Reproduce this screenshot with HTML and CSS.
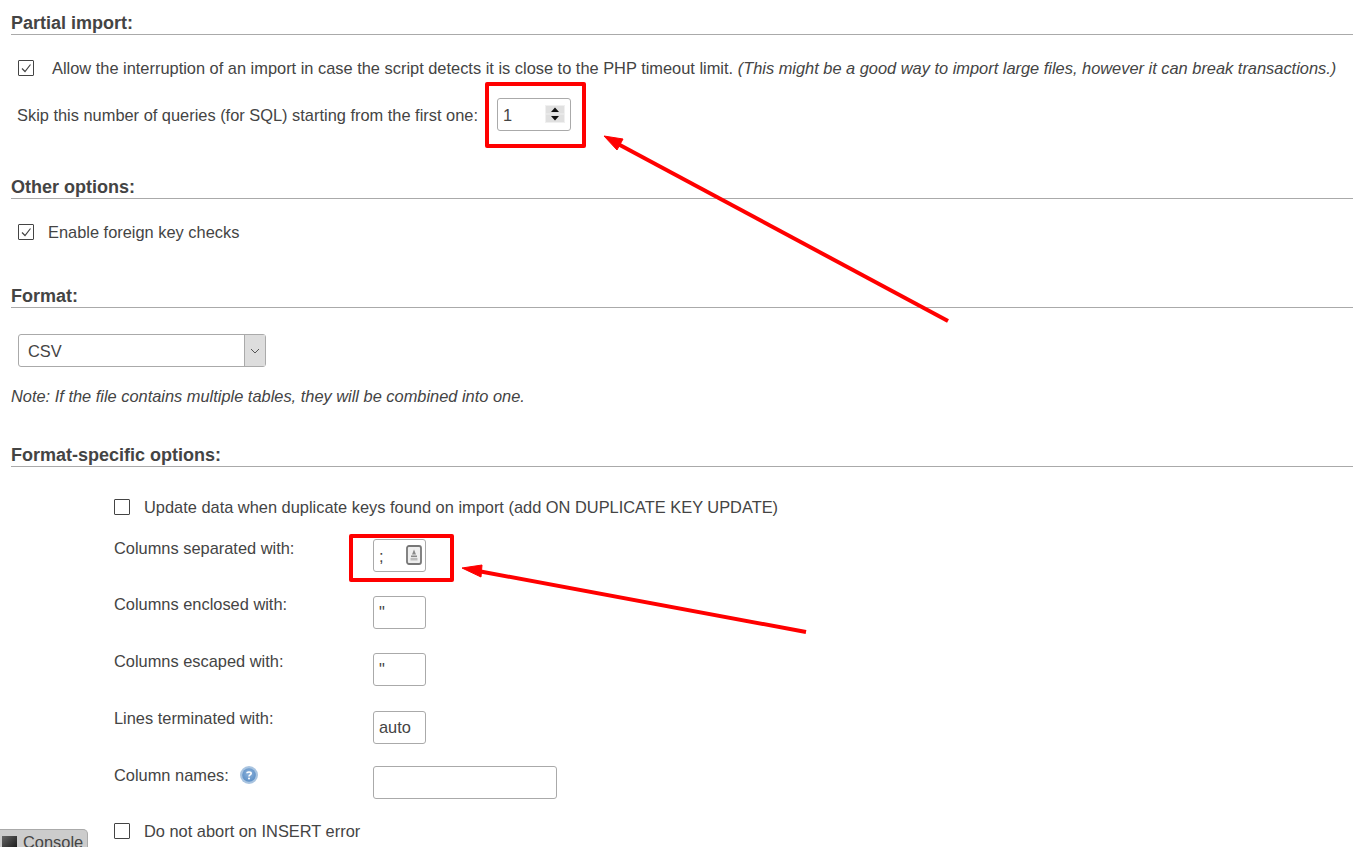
FILE: index.html
```html
<!DOCTYPE html>
<html lang="en">
<head>
<meta charset="utf-8">
<title>Import</title>
<link rel="stylesheet" href="styles.css">
</head>
<body>
<main class="page">
  <section class="sec sec-partial">
    <h2 class="sec-title">Partial import:</h2>
    <div class="row row-allow">
      <span class="check checked"><svg viewBox="0 0 14 14" width="14" height="14"><path d="M3 7.5 L6 10.5 L11.5 3.5" fill="none" stroke="#444" stroke-width="1.2"/></svg></span>
      <span>Allow the interruption of an import in case the script detects it is close to the PHP timeout limit. <em>(This might be a good way to import large files, however it can break transactions.)</em></span>
    </div>
    <div class="row row-skip">
      <span class="skip-label">Skip this number of queries (for SQL) starting from the first one:</span>
      <span class="input input-num">1
        <span class="spin">
          <svg viewBox="0 0 20 18" width="20" height="18"><rect width="20" height="18" fill="#f0f0f0"/><rect x="1" y="1" width="18" height="7.5" fill="#e0e0e0"/><rect x="1" y="9.5" width="18" height="7.5" fill="#e0e0e0"/><path d="M10 2.5 L14 7 H6 Z M10 15.5 L14 11 H6 Z" fill="#111"/></svg>
        </span>
      </span>
    </div>
  </section>

  <section class="sec sec-other">
    <h2 class="sec-title">Other options:</h2>
    <div class="row row-fk">
      <span class="check checked"><svg viewBox="0 0 14 14" width="14" height="14"><path d="M3 7.5 L6 10.5 L11.5 3.5" fill="none" stroke="#444" stroke-width="1.2"/></svg></span>
      <span>Enable foreign key checks</span>
    </div>
  </section>

  <section class="sec sec-format">
    <h2 class="sec-title">Format:</h2>
    <div class="select"><span class="select-val">CSV</span><span class="select-btn"><svg viewBox="0 0 10 6" width="10" height="6"><path d="M1 1 L5 5 L9 1" fill="none" stroke="#555" stroke-width="1"/></svg></span></div>
    <p class="note">Note: If the file contains multiple tables, they will be combined into one.</p>
  </section>

  <section class="sec sec-specific">
    <h2 class="sec-title">Format-specific options:</h2>
    <div class="opts">
      <div class="row row-dup"><span class="check"></span><span>Update data when duplicate keys found on import (add ON DUPLICATE KEY UPDATE)</span></div>
      <div class="field field-sep"><label class="field-label">Columns separated with:</label>
        <span class="input input-small input-semi">;
          <svg class="keyicon" viewBox="0 0 16 20" width="16" height="20"><rect x="1" y="1" width="14" height="18" rx="2" fill="#eee" stroke="#777" stroke-width="1.8"/><path d="M8 4.5 L10 9.5 H6 Z" fill="#888"/><rect x="5" y="10.5" width="6" height="1.6" fill="#888"/><rect x="4.5" y="13" width="7" height="2.5" fill="#bbb"/></svg>
        </span></div>
      <div class="field"><label class="field-label">Columns enclosed with:</label><span class="input input-small input-quote">"</span></div>
      <div class="field"><label class="field-label">Columns escaped with:</label><span class="input input-small input-quote">"</span></div>
      <div class="field field-lines"><label class="field-label">Lines terminated with:</label><span class="input input-small input-auto">auto</span></div>
      <div class="field field-names"><label class="field-label">Column names:
        <svg class="help" viewBox="0 0 18 18" width="18" height="18"><defs><radialGradient id="hg" cx="50%" cy="40%" r="60%"><stop offset="0" stop-color="#8fb4dc"/><stop offset="1" stop-color="#5c8fc6"/></radialGradient></defs><circle cx="9" cy="9" r="9" fill="#a9c4e0"/><circle cx="9" cy="9" r="6.8" fill="url(#hg)"/><path d="M6.8 7.2 C6.9 5.6 11.2 5.5 11.2 7.5 C11.2 9 9 8.8 9 10.4" fill="none" stroke="#fff" stroke-width="1.6"/><circle cx="9" cy="12.6" r="1" fill="#fff"/></svg>
      </label><span class="input input-wide"></span></div>
      <div class="row row-abort"><span class="check"></span><span>Do not abort on INSERT error</span></div>
    </div>
  </section>
</main>

<div class="console"><span class="console-icon"></span>Console</div>

<div class="mark mark-skip"></div>
<div class="mark mark-sep"></div>
<svg class="arrows" viewBox="0 0 1353 847" width="1353" height="847">
  <path d="M948 321 L618 144" stroke="#f00" stroke-width="4" fill="none"/>
  <path d="M604 136 L623 139 L617 150 Z" fill="#f00" stroke="#f00"/>
  <path d="M806 632 L478 571" stroke="#f00" stroke-width="4" fill="none"/>
  <path d="M462 568 L482 565 L481 577 Z" fill="#f00" stroke="#f00"/>
</svg>
</body>
</html>
```

FILE: styles.css
```css
* { box-sizing: border-box; }
html, body { margin: 0; padding: 0; height: 847px; overflow: hidden; background: #fff; }
body { position: relative; font-family: "Liberation Sans", Arial, sans-serif; font-size: 16.4px; color: #444; }
.page { padding: 11px 0 0 11px; }
.sec-title { margin: 0; font-size: 18px; font-weight: 700; line-height: 25px; height: 24px; color: #444; border-bottom: 1px solid #aaa; }
.sec-other { margin-top: 44px; }
.sec-format { margin-top: 41px; }
.sec-specific { margin-top: 36px; }
.row { display: flex; align-items: center; white-space: nowrap; }
.check { flex: none; display: inline-flex; align-items: center; justify-content: center; width: 16px; height: 16px; border: 1px solid #444; border-radius: 1px; background: #fff; }
.row-allow { margin: 22px 0 0 7px; height: 22px; gap: 18px; }
.row-allow em { font-style: italic; }
.row-skip { margin: 19px 0 0 6px; gap: 19px; height: 33px; }
.skip-label { padding-top: 2px; }
.input { display: inline-block; position: relative; flex: none; height: 33px; border: 1px solid #aaa; border-radius: 3px; background: #fff; line-height: 31px; color: #444; }
.input-num { width: 74px; padding-left: 5px; line-height: 33px; }
.spin { position: absolute; right: 5px; top: 6px; display: flex; }
.row-fk { margin: 22px 0 0 7px; height: 22px; gap: 14px; }
.select { display: flex; margin: 26px 0 0 7px; width: 248px; height: 33px; border: 1px solid #aaa; border-radius: 3px; background: #fff; line-height: 33px; }
.select-val { flex: 1; padding-left: 9px; }
.select-btn { flex: none; width: 21px; display: flex; align-items: center; justify-content: center; background: #ddd; border-left: 1px solid #aaa; }
.note { margin: 18px 0 0; line-height: 22px; font-style: italic; }
.opts { padding-left: 103px; }
.row-dup { margin: 29px 0 0; height: 22px; gap: 14px; }
.field { display: flex; align-items: flex-start; margin-top: 21px; height: 36px; }
.field .input { margin-top: 3px; }
.field-sep { margin-top: 19px; height: 35px; }
.field-sep .input { margin-top: 2px; }
.field-lines .input { margin-top: 4px; }
.field-names .input { margin-top: 2px; }
.field-label { flex: none; width: 259px; line-height: 22px; display: flex; align-items: center; gap: 11px; }
.input-small { width: 53px; padding-left: 5px; }
.input-semi { line-height: 33px; }
.input-wide { width: 184px; }
.keyicon { position: absolute; right: 3px; top: 5px; }
.row-abort { margin-top: 20px; height: 22px; gap: 14px; }
.console { position: absolute; left: 0; top: 829px; width: 88px; height: 30px; display: flex; align-items: flex-start; gap: 6px; padding: 2px 0 0 2px; background: #ccc; border: 1px solid #aaa; border-left: 0; border-radius: 0 5px 0 0; line-height: 20px; }
.console-icon { flex: none; width: 15px; height: 15px; margin-top: 4px; background: linear-gradient(135deg, #666, #111); }
.mark { position: absolute; border: 4px solid #f00; border-radius: 2px; }
.mark-skip { left: 485px; top: 82px; width: 101px; height: 66px; }
.mark-sep { left: 349px; top: 534px; width: 105px; height: 48px; }
.arrows { position: absolute; left: 0; top: 0; pointer-events: none; }
```
